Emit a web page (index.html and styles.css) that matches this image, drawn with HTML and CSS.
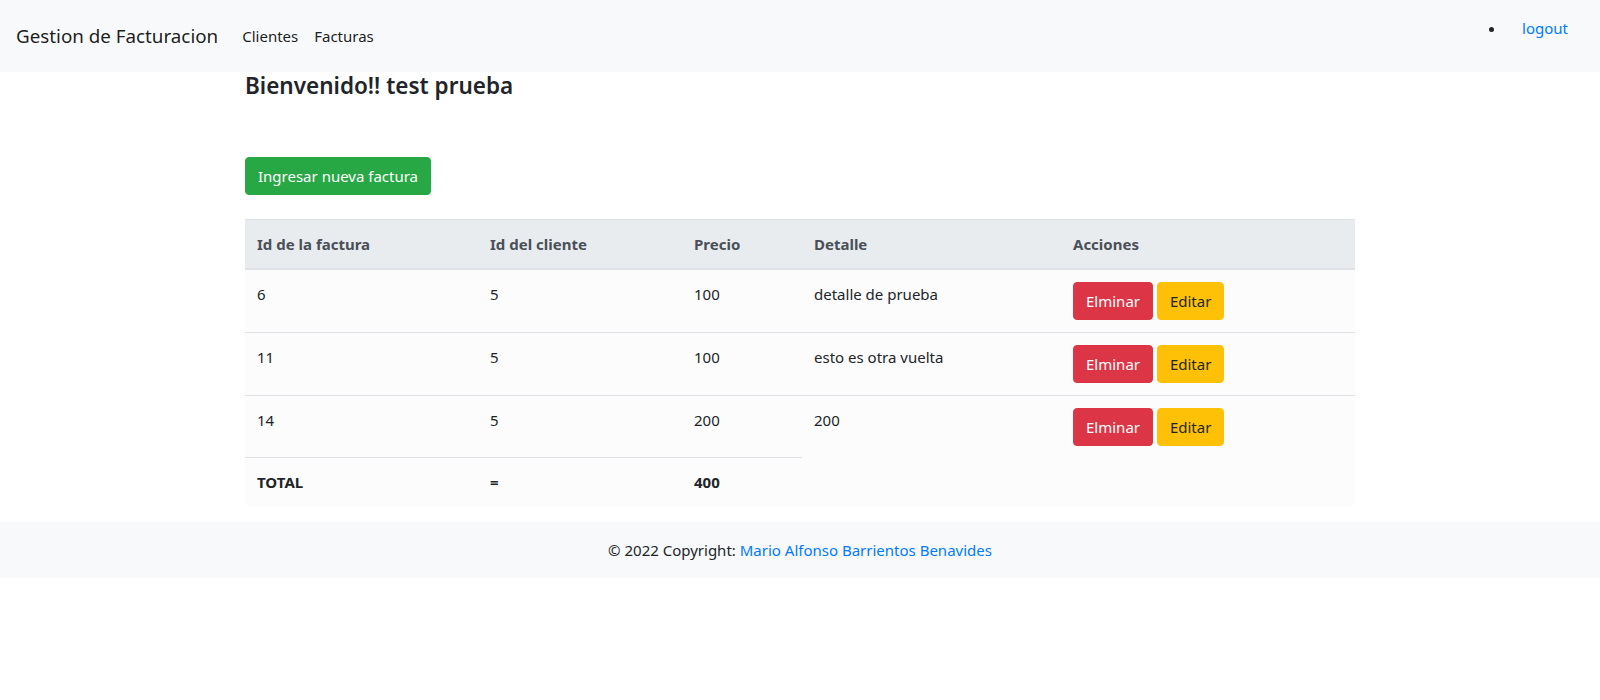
FILE: index.html
```html
<!DOCTYPE html>
<html lang="es">
<head>
<meta charset="utf-8">
<title>Gestion de Facturacion</title>
<link rel="stylesheet" href="styles.css">
</head>
<body>
<nav class="navbar">
  <a class="brand" href="#">Gestion de Facturacion</a>
  <ul class="nav-links">
    <li><a class="nav-link" href="#">Clientes</a></li>
    <li><a class="nav-link" href="#">Facturas</a></li>
  </ul>
  <ul class="user-list">
    <li><a class="nav-link logout" href="#">logout</a></li>
  </ul>
</nav>
<main class="container">
  <h4 class="welcome">Bienvenido!! test prueba</h4>
  <div class="actions-bar">
    <a class="btn btn-success" href="#">Ingresar nueva factura</a>
  </div>
  <table class="table">
    <thead>
      <tr>
        <th class="c1">Id de la factura</th>
        <th class="c2">Id del cliente</th>
        <th class="c3">Precio</th>
        <th class="c4">Detalle</th>
        <th class="c5">Acciones</th>
      </tr>
    </thead>
    <tbody>
      <tr>
        <td>6</td><td>5</td><td>100</td><td>detalle de prueba</td>
        <td class="acts"><a class="btn btn-danger" href="#">Elminar</a> <a class="btn btn-warning" href="#">Editar</a></td>
      </tr>
      <tr>
        <td>11</td><td>5</td><td>100</td><td>esto es otra vuelta</td>
        <td class="acts"><a class="btn btn-danger" href="#">Elminar</a> <a class="btn btn-warning" href="#">Editar</a></td>
      </tr>
      <tr>
        <td>14</td><td>5</td><td>200</td><td>200</td>
        <td class="acts"><a class="btn btn-danger" href="#">Elminar</a> <a class="btn btn-warning" href="#">Editar</a></td>
      </tr>
      <tr class="total">
        <td><b>TOTAL</b></td><td><b>=</b></td><td><b>400</b></td>
      </tr>
    </tbody>
  </table>
</main>
<footer class="footer">
  © 2022 Copyright: <a href="#">Mario Alfonso Barrientos Benavides</a>
</footer>
</body>
</html>
```
FILE: styles.css
```css
* { box-sizing: border-box; }
html, body { margin: 0; padding: 0; }
body {
  font-family: "Noto Sans", "Open Sans", sans-serif;
  font-size: 15px;
  line-height: 24px;
  color: #212529;
  background: #fff;
}
a { color: #007bff; text-decoration: none; }

.navbar {
  display: flex;
  align-items: center;
  justify-content: space-between;
  padding: 8px 16px;
  background: #f8f9fa;
}
.brand {
  font-size: 18.8px;
  line-height: 30px;
  padding: 5px 0;
  margin-right: 16px;
  color: rgba(0,0,0,.9);
}
.nav-links {
  display: flex;
  list-style: none;
  margin: 0 auto 0 0;
  padding: 0;
}
.nav-link {
  display: block;
  padding: 8px;
  color: rgba(0,0,0,.9);
}
.user-list {
  margin: 0 0 16px 0;
  padding-left: 40px;
}
.user-list li { list-style: disc; }
.nav-link.logout { color: #007bff; padding: 8px 16px; }

.container {
  width: 1140px;
  margin: 0 auto;
  padding: 0 15px;
}
.welcome {
  font-size: 22.5px;
  font-weight: 600;
  line-height: 28.8px;
  margin: 0 0 56px;
}
.actions-bar { margin-bottom: 24px; }

.btn {
  display: inline-block;
  font-size: 15px;
  line-height: 24px;
  padding: 6px 12px;
  border: 1px solid transparent;
  border-radius: 4px;
  vertical-align: top;
}
.btn-success { background: #28a745; border-color: #28a745; color: #fff; }
.btn-danger { background: #dc3545; border-color: #dc3545; color: #fff; }
.btn-warning { background: #ffc107; border-color: #ffc107; color: #212529; }

.table {
  width: 100%;
  border-collapse: collapse;
  background: #fcfcfc;
  margin-bottom: 16px;
}
.table th, .table td {
  padding: 12px;
  text-align: left;
  vertical-align: top;
  border-top: 1px solid #dee2e6;
}
.table thead th {
  background: #e9ecef;
  color: #495057;
  font-weight: 700;
  border-bottom: 2px solid #dee2e6;
}
.acts { white-space: nowrap; }
.c1 { width: 233px; }
.c2 { width: 204px; }
.c3 { width: 120px; }
.c4 { width: 259px; }
.table b { font-weight: 700; }

.footer {
  background: #f8f9fa;
  text-align: center;
  padding: 16px;
}
```
